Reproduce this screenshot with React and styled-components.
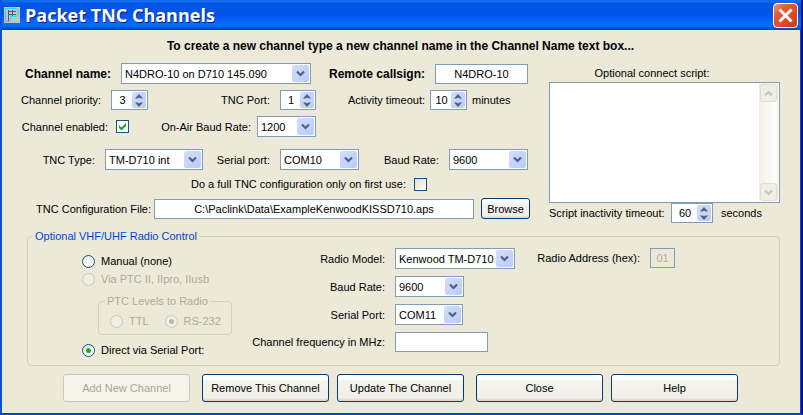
import React from "react";
import styled, { createGlobalStyle } from "styled-components";

const GlobalStyle = createGlobalStyle`
  *, *::before, *::after { box-sizing: border-box; }
  body { margin: 0; background: #ece9d8; }
  body, button, input, select, textarea {
    font-family: "Liberation Sans", Arial, sans-serif;
    font-size: 11px;
    line-height: 14px;
    color: #000;
  }
`;

const Window = styled.main`
  display: flex;
  flex-direction: column;
  min-height: 100vh;
  background: #ece9d8;
  border-left: 2px solid #0855dd;
  border-right: 2px solid #00138c;
  border-bottom: 2px solid #0a3fd6;
`;

const TitleBar = styled.header`
  display: flex;
  align-items: center;
  gap: 5px;
  height: 30px;
  padding: 0 3px 0 2px;
  background: linear-gradient(
    #0a5fe0 0, #1a76f4 1px, #0058e6 3px, #0054e3 12px, #0058ee 17px,
    #0267fb 21px, #046dff 25px, #0562f0 27px, #0144d0 29px, #0040c8 30px
  );
`;

const Title = styled.h1`
  flex: 1;
  margin: 0;
  font: bold 18px/26px "Open Sans", sans-serif;
  color: #fff;
  text-shadow: 1px 1px 0 #0a1883;
`;

const CloseButton = styled.button`
  display: flex;
  width: 25px;
  height: 25px;
  padding: 0;
  border: 1px solid #fff;
  border-radius: 4px;
  background: linear-gradient(135deg, #ee9a80 0, #e25a38 30%, #de4a20 65%, #c43c14 100%);
  svg { margin: auto; }
`;

const Body = styled.form`
  flex: 1;
  padding: 9px 20px 10px 19px;
  border-right: 1px solid #0844dd;
`;

const Heading = styled.h2`
  margin: 0 0 10px;
  font-size: 12px;
  line-height: 14px;
  text-align: center;
`;

const Columns = styled.div`
  display: grid;
  grid-template-columns: minmax(0, 1fr) 231px;
  gap: 19px;
`;

const Stack = styled.div`
  display: flex;
  flex-direction: column;
  gap: ${(p) => p.$gap}px;
`;

const Row = styled.div`
  display: flex;
  flex: ${(p) => (p.$grow ? "1" : "none")};
  align-items: center;
  gap: ${(p) => p.$gap ?? 10}px;
  padding-right: ${(p) => p.$end ?? 0}px;
`;

const Label = styled.label`
  flex: none;
  width: ${(p) => (p.$width ? p.$width + "px" : "auto")};
  text-align: ${(p) => p.$align ?? "right"};
  white-space: nowrap;
  font-size: ${(p) => (p.$strong ? 12 : 11)}px;
  font-weight: ${(p) => (p.$strong ? "bold" : "normal")};
`;

const TextInput = styled.input`
  flex: ${(p) => (p.$width ? "none" : "1")};
  width: ${(p) => (p.$width ? p.$width + "px" : "auto")};
  min-width: 0;
  height: 20px;
  padding: 0 4px;
  border: 1px solid #7f9db9;
  border-radius: 0;
  background: #fff;
  text-align: center;
  &:disabled { background: #ece9d8; color: #b5ab98; }
`;

const ComboBox = styled.div`
  position: relative;
  flex: ${(p) => (p.$width ? "none" : "1")};
  width: ${(p) => (p.$width ? p.$width + "px" : "auto")};
  height: 21px;
`;

const ComboSelect = styled.select`
  appearance: none;
  display: block;
  width: 100%;
  height: 100%;
  padding: 0 19px 0 3px;
  border: 1px solid #7f9db9;
  border-radius: 0;
  background: #fff;
`;

const ComboArrow = styled.span`
  position: absolute;
  top: 2px;
  right: 2px;
  display: flex;
  width: 17px;
  height: 17px;
  border-radius: 2px;
  background: linear-gradient(135deg, #d3defd, #b9cbf8);
  pointer-events: none;
  svg { margin: auto; }
`;

const SpinBox = styled.div`
  display: flex;
  flex: none;
  width: ${(p) => p.$width}px;
  height: 20px;
  padding: 1px;
  border: 1px solid #7f9db9;
  background: #fff;
`;

const SpinInput = styled.input`
  appearance: textfield;
  flex: 1;
  min-width: 0;
  padding: 0;
  border: 0;
  background: transparent;
  text-align: center;
  &::-webkit-inner-spin-button { display: none; }
`;

const SpinButtons = styled.div`
  display: flex;
  flex-direction: column;
  width: 14px;
  border-radius: 2px;
  background: linear-gradient(135deg, #d3defd, #b9cbf8);
`;

const SpinButton = styled.button`
  display: flex;
  flex: 1;
  padding: 0;
  border: 0;
  background: none;
  svg { margin: auto; }
`;

const CheckBox = styled.input`
  appearance: none;
  flex: none;
  width: 13px;
  height: 13px;
  margin: 0;
  border: 1px solid #1c5180;
  background: linear-gradient(135deg, #dcdcd7, #fff);
  &:checked {
    background: #fff url("data:image/svg+xml,%3Csvg xmlns='http://www.w3.org/2000/svg' width='11' height='11'%3E%3Cpath d='M2 4v3l2.500 2.500L9 5V2L4.500 6.500z' fill='%2321a121'/%3E%3C/svg%3E");
  }
`;

const Radio = styled.input`
  appearance: none;
  display: flex;
  flex: none;
  width: 13px;
  height: 13px;
  margin: 0;
  border: 1px solid #1c5180;
  border-radius: 50%;
  background: linear-gradient(135deg, #dcdcd7, #fff 60%);
  &:checked::after {
    content: "";
    width: 5px;
    height: 5px;
    margin: auto;
    border-radius: 50%;
    background: #25a822;
  }
  &:disabled { border-color: #cac8bb; background: #f1efe4; }
  &:disabled:checked::after { background: #b8b8b4; }
`;

const RadioLabel = styled.label`
  display: flex;
  align-items: center;
  gap: 6px;
  height: 18px;
  white-space: nowrap;
  color: ${(p) => (p.$disabled ? "#b0a998" : "#000")};
`;

const PushButton = styled.button`
  flex: none;
  width: ${(p) => (p.$small ? 49 : 127)}px;
  height: ${(p) => (p.$small ? 21 : 28)}px;
  padding: 0;
  border: 1px solid #003c74;
  border-radius: 3px;
  background: linear-gradient(#fff 0, #fff 15%, #f4f3ee 25%, #f0efe8 88%, #d6d0c5 100%);
  &:disabled { border-color: #c9c7ba; background: #f5f4ea; color: #a9a799; }
`;

const ScriptColumn = styled.div`
  display: flex;
  flex-direction: column;
  padding-top: 3px;
`;

const ScriptLabel = styled.label`
  margin-bottom: 2px;
  padding-right: 25px;
  text-align: center;
`;

const ScriptBox = styled.div`
  display: flex;
  height: 121px;
  padding: 1px;
  border: 1px solid #7f9db9;
  background: #fff;
`;

const ScriptText = styled.textarea`
  flex: 1;
  min-width: 0;
  padding: 2px;
  border: 0;
  resize: none;
  background: transparent;
`;

const ScrollBar = styled.div`
  display: flex;
  flex-direction: column;
  justify-content: space-between;
  width: 19px;
  border: 1px solid #eeede5;
  border-width: 0 1px;
  background: linear-gradient(90deg, #f3f1ec, #fefefb);
`;

const ScrollButton = styled.button`
  display: flex;
  height: 18px;
  padding: 0;
  border: 1px solid #e0ddcf;
  border-radius: 3px;
  background: #f1efe5;
  svg { margin: auto; }
`;

const GroupBox = styled.fieldset`
  min-width: 0;
  margin: ${(p) => (p.$inner ? "6px 0 6px 16px" : "6px 0 8px 6px")};
  padding: ${(p) => (p.$inner ? "4px 11px" : "0 0 6px")};
  border: 1px solid #d0d0bf;
  border-radius: 4px;
`;

const GroupTitle = styled.legend`
  margin-left: ${(p) => (p.$inner ? -5 : 5)}px;
  padding: 0 2px;
  color: ${(p) => (p.$inner ? "#b0a998" : "#0046d5")};
`;

const RadioControls = styled.div`
  display: grid;
  grid-template-columns: 150px 285px 1fr;
  align-items: start;
  padding: 5px 0 0 54px;
`;

const RadioChoices = styled.div`
  display: flex;
  flex-direction: column;
  padding-top: 4px;
`;

const Actions = styled.div`
  display: flex;
  flex-wrap: wrap;
  justify-content: center;
  gap: 12px;
`;

const Chevron = ({ up, color = "#4d6185" }) => (
  <svg width="9" height="7" viewBox="0 0 9 7" aria-hidden="true">
    <path d={up ? "M1 5.500 4.500 2 8 5.500" : "M1 1.500 4.500 5 8 1.500"} fill="none" stroke={color} strokeWidth="2.200" />
  </svg>
);

const Triangle = ({ up }) => (
  <svg width="8" height="5" viewBox="0 0 8 5" aria-hidden="true">
    <path d={up ? "M0 4.500 4 0l4 4.500H5.500L4 3.500 2.500 4.500z" : "M0 .5 4 5 8 .5H5.500L4 1.500 2.500.5z"} fill="#4d6185" />
  </svg>
);

const Logo = () => (
  <svg width="16" height="16" viewBox="0 0 16 16" aria-hidden="true">
    <path fill="#c3c3c3" d="M0 0h16v16H0z" />
    <path d="M4.500 3v11M8.500 3v6M4 4.500h8M4 7.500h8" fill="none" stroke="#3a5f92" />
    <path d="M1.500 1.500h11l1.500 1.500v5l-1.500 1.500H6.500v5h-5z" fill="none" stroke="#22dcea" />
  </svg>
);

const Combo = ({ id, value, width }) => (
  <ComboBox $width={width}>
    <ComboSelect id={id} defaultValue={value}>
      <option>{value}</option>
    </ComboSelect>
    <ComboArrow><Chevron /></ComboArrow>
  </ComboBox>
);

const Spinner = ({ id, value, width }) => (
  <SpinBox $width={width}>
    <SpinInput id={id} type="number" defaultValue={value} />
    <SpinButtons>
      <SpinButton type="button" aria-label="Increase"><Triangle up /></SpinButton>
      <SpinButton type="button" aria-label="Decrease"><Triangle /></SpinButton>
    </SpinButtons>
  </SpinBox>
);

export default function App() {
  return (
    <Window>
      <GlobalStyle />
      <TitleBar>
        <Logo />
        <Title>Packet TNC Channels</Title>
        <CloseButton type="button" aria-label="Close window">
          <svg width="17" height="17" viewBox="0 0 17 17" aria-hidden="true">
            <path d="M2.500 2.500l12 12M14.500 2.500l-12 12" stroke="#fff" strokeWidth="3" />
          </svg>
        </CloseButton>
      </TitleBar>
      <Body onSubmit={(e) => e.preventDefault()}>
        <Heading>To create a new channel type a new channel name in the Channel Name text box...</Heading>
        <Columns>
          <Stack $gap={12}>
            <Stack $gap={6}>
              <Row $end={2}>
                <Label $strong $width={90} htmlFor="name">Channel name:</Label>
                <Combo id="name" value="N4DRO-10 on D710 145.090" />
                <Label $strong $width={104} htmlFor="callsign">Remote callsign:</Label>
                <TextInput id="callsign" $width={93} defaultValue="N4DRO-10" />
              </Row>
              <Row>
                <Label $width={80} $align="left" htmlFor="priority">Channel priority:</Label>
                <Spinner id="priority" value="3" width={37} />
                <Label $width={112} htmlFor="tnc-port">TNC Port:</Label>
                <Spinner id="tnc-port" value="1" width={36} />
                <Row $gap={5}>
                  <Label $width={99} htmlFor="activity">Activity timeout:</Label>
                  <Spinner id="activity" value="10" width={37} />
                  <span>minutes</span>
                </Row>
              </Row>
              <Row>
                <Row $gap={8}>
                  <Label $width={87} htmlFor="enabled">Channel enabled:</Label>
                  <CheckBox id="enabled" type="checkbox" defaultChecked />
                </Row>
                <Row $gap={6}>
                  <Label $width={112} htmlFor="air-baud">On-Air Baud Rate:</Label>
                  <Combo id="air-baud" value="1200" width={59} />
                </Row>
              </Row>
            </Stack>
            <Stack $gap={7}>
              <Row>
                <Label $width={74} htmlFor="tnc-type">TNC Type:</Label>
                <Combo id="tnc-type" value="TM-D710 int" width={98} />
                <Label $width={57} htmlFor="tnc-serial">Serial port:</Label>
                <Combo id="tnc-serial" value="COM10" width={79} />
                <Label $width={70} htmlFor="tnc-baud">Baud Rate:</Label>
                <Combo id="tnc-baud" value="9600" width={79} />
              </Row>
              <Row $gap={8}>
                <Label $width={385} htmlFor="first-use">Do a full TNC configuration only on first use:</Label>
                <CheckBox id="first-use" type="checkbox" />
              </Row>
              <Row $gap={3}>
                <Label $width={130} htmlFor="config">TNC Configuration File:</Label>
                <Row $grow $gap={7}>
                  <TextInput id="config" defaultValue="C:\Paclink\Data\ExampleKenwoodKISSD710.aps" />
                  <PushButton $small type="button">Browse</PushButton>
                </Row>
              </Row>
            </Stack>
          </Stack>
          <ScriptColumn>
            <ScriptLabel htmlFor="script">Optional connect script:</ScriptLabel>
            <ScriptBox>
              <ScriptText id="script" />
              <ScrollBar>
                <ScrollButton type="button" disabled aria-label="Scroll up"><Chevron up color="#c9c7ba" /></ScrollButton>
                <ScrollButton type="button" disabled aria-label="Scroll down"><Chevron color="#c9c7ba" /></ScrollButton>
              </ScrollBar>
            </ScriptBox>
            <Row $gap={8}>
              <Label $width={114} $align="left" htmlFor="inactivity">Script inactivity timeout:</Label>
              <Spinner id="inactivity" value="60" width={42} />
              <span>seconds</span>
            </Row>
          </ScriptColumn>
        </Columns>
        <GroupBox>
          <GroupTitle>Optional VHF/UHF Radio Control</GroupTitle>
          <RadioControls>
            <RadioChoices>
              <RadioLabel><Radio type="radio" name="control" />Manual (none)</RadioLabel>
              <RadioLabel $disabled><Radio type="radio" name="control" disabled />Via PTC II, IIpro, IIusb</RadioLabel>
              <GroupBox $inner>
                <GroupTitle $inner>PTC Levels to Radio</GroupTitle>
                <Row $gap={16}>
                  <RadioLabel $disabled><Radio type="radio" name="levels" disabled />TTL</RadioLabel>
                  <RadioLabel $disabled><Radio type="radio" name="levels" disabled defaultChecked />RS-232</RadioLabel>
                </Row>
              </GroupBox>
              <RadioLabel><Radio type="radio" name="control" defaultChecked />Direct via Serial Port:</RadioLabel>
            </RadioChoices>
            <Stack $gap={7}>
              <Row>
                <Label $width={153} htmlFor="model">Radio Model:</Label>
                <Combo id="model" value="Kenwood TM-D710" width={120} />
              </Row>
              <Row>
                <Label $width={153} htmlFor="radio-baud">Baud Rate:</Label>
                <Combo id="radio-baud" value="9600" width={69} />
              </Row>
              <Row>
                <Label $width={153} htmlFor="radio-serial">Serial Port:</Label>
                <Combo id="radio-serial" value="COM11" width={68} />
              </Row>
              <Row>
                <Label $width={153} htmlFor="frequency">Channel frequency in MHz:</Label>
                <TextInput id="frequency" $width={93} />
              </Row>
            </Stack>
            <Row>
              <Label $width={123} htmlFor="address">Radio Address (hex):</Label>
              <TextInput id="address" $width={25} defaultValue="01" disabled />
            </Row>
          </RadioControls>
        </GroupBox>
        <Actions>
          <PushButton type="button" disabled>Add New Channel</PushButton>
          <Row $gap={8}>
            <PushButton type="button">Remove This Channel</PushButton>
            <PushButton type="button">Update The Channel</PushButton>
          </Row>
          <Row $gap={8}>
            <PushButton type="button">Close</PushButton>
            <PushButton type="button">Help</PushButton>
          </Row>
        </Actions>
      </Body>
    </Window>
  );
}
